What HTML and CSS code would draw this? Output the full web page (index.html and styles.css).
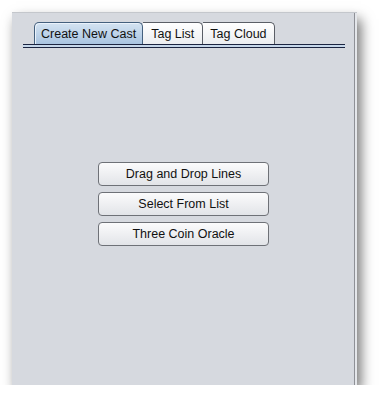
FILE: index.html
```html
<!DOCTYPE html>
<html lang="en">
<head>
    <meta charset="UTF-8">
    <title>Cast</title>
    <link rel="stylesheet" href="styles.css">
</head>
<body>
    <div class="window">
        <div class="tab-strip">
            <div class="tabs">
                <div class="tab selected">Create New Cast</div>
                <div class="tab wide">Tag List</div>
                <div class="tab">Tag Cloud</div>
            </div>
            <div class="tab-line"></div>
        </div>
        <div class="actions">
            <button class="action-btn">Drag and Drop Lines</button>
            <button class="action-btn">Select From List</button>
            <button class="action-btn">Three Coin Oracle</button>
        </div>
    </div>
</body>
</html>
```

FILE: styles.css
```css
body {
    margin: 0;
    padding: 0;
    background: #fff;
    font-family: 'Liberation Sans', Arial, sans-serif;
    font-size: 12.5px;
}
.window {
    margin: 12px 0 0 12px;
    width: 345px;
    height: 373px;
    box-sizing: border-box;
    background: #d6d9df;
    border-top: 1px solid #c4c7cc;
    box-shadow: inset -2px 0 0 #e4e6ea, inset -3px 0 0 #8e9096, 4px 7px 12px rgba(0, 0, 0, 0.55);
    padding: 9px 0 0 11px;
}
.tab-strip {
    width: 322px;
}
.tabs {
    display: flex;
    padding-left: 11px;
    height: 22px;
}
.tab {
    height: 22px;
    box-sizing: border-box;
    padding: 4px 7px 0 7px;
    border: 1px solid #5a5e66;
    border-bottom: none;
    border-left: none;
    border-radius: 0 5px 0 0;
    background: linear-gradient(#ffffff, #ebedf0);
    color: #111;
    line-height: 15px;
}
.tab.wide {
    padding: 4px 8px 0 8px;
}
.tab.selected {
    border: 1px solid #44607e;
    border-bottom: none;
    border-radius: 5px 5px 0 0;
    background: linear-gradient(#d4e3f2, #a9c4e0);
    box-shadow: inset 1px 1px 0 #eaf2fb;
    padding: 4px 6px 0 6px;
}
.tab-line {
    height: 2px;
    border-top: 1px solid #1b2440;
    border-bottom: 1px solid #1b2440;
    background: #c6d7ea;
}
.actions {
    display: flex;
    flex-direction: column;
    align-items: flex-start;
    gap: 6px;
    margin: 114px 0 0 75px;
}
.action-btn {
    width: 171px;
    height: 24px;
    border: 1px solid #6e7177;
    border-radius: 4px;
    background: linear-gradient(#fbfbfc, #e2e4e8);
    font-family: 'Liberation Sans', Arial, sans-serif;
    font-size: 12.5px;
    color: #111;
    padding: 0;
}
```
